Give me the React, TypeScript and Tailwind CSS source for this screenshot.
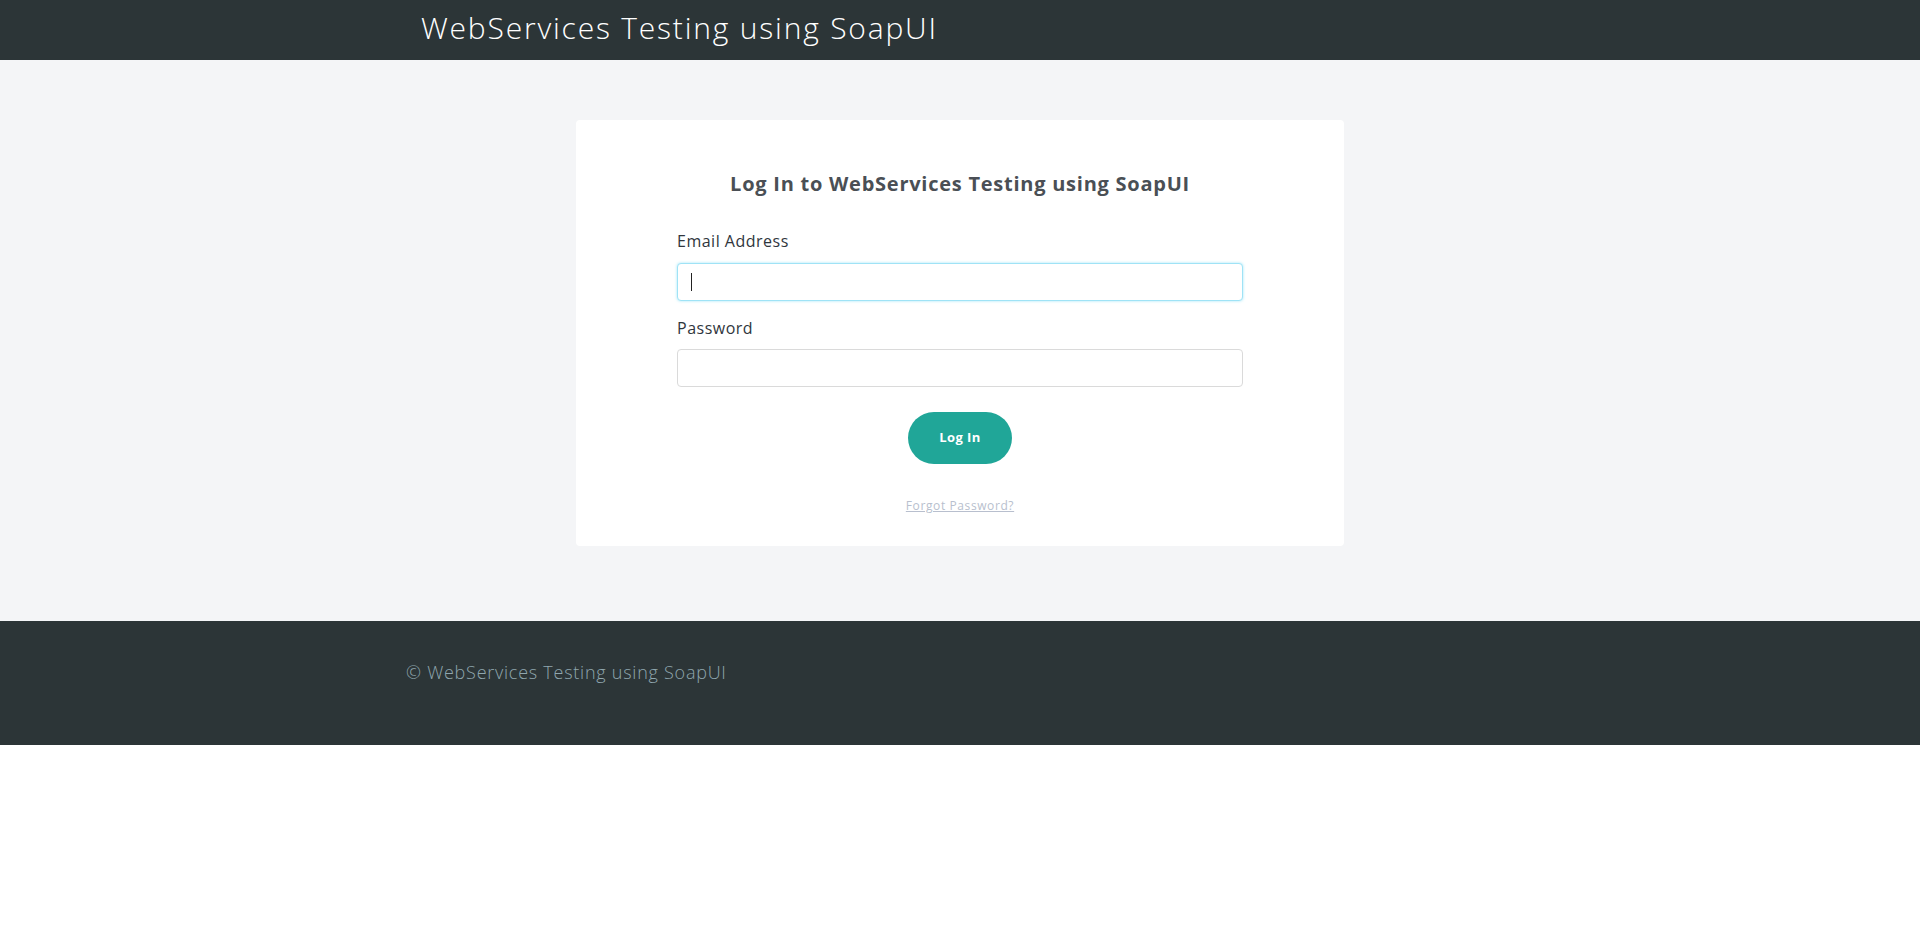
import React from 'react';

const font = { fontFamily: '"Open Sans", "Liberation Sans", sans-serif' };

const App = () => {
  return (
    <div className="min-h-screen bg-white" style={font}>
      {/* Top bar */}
      <header className="h-[60px] bg-[#2c3537]">
        <div className="mx-auto w-[1140px] px-[31px]">
          <h1 className="pt-[6px] text-[30px] font-light leading-[44px] tracking-[1.8px] text-white">
            WebServices Testing using SoapUI
          </h1>
        </div>
      </header>

      {/* Login area */}
      <main className="bg-[#f4f5f7] pt-[60px] pb-[75px]">
        <div className="mx-auto w-[768px] rounded-[4px] bg-white pt-[49px] pb-[30px]">
          <h2 className="text-center text-[20px] font-bold leading-[30px] tracking-[0.75px] text-[#4a4f55]">
            Log In to WebServices Testing using SoapUI
          </h2>

          <form className="mx-auto mt-[30px] w-[566px]" onSubmit={(e) => e.preventDefault()}>
            <label className="block text-[16px] font-normal leading-[24px] tracking-[0.5px] text-[#30363d]">
              Email Address
            </label>
            <div className="mt-[10px] flex h-[38px] items-center rounded-[4px] border border-[#9fe3f6] bg-white px-[13px] shadow-[0_0_3px_rgba(102,214,245,0.6)]">
              <span className="h-[18px] w-px bg-[#222]" />
            </div>

            <label className="mt-[15px] block text-[16px] font-normal leading-[24px] tracking-[0.5px] text-[#30363d]">
              Password
            </label>
            <div className="mt-[9px] h-[38px] rounded-[4px] border border-[#dadada] bg-white" />

            <div className="mt-[25px] flex justify-center">
              <button
                type="submit"
                className="h-[52px] w-[104px] rounded-full bg-[#20a698] text-[13px] font-bold tracking-[0.4px] text-white"
              >
                Log In
              </button>
            </div>

            <div className="mt-[28px] text-center">
              <a href="#" className="text-[12px] leading-[16px] tracking-[0.6px] text-[#b8bfce] underline">
                Forgot Password?
              </a>
            </div>
          </form>
        </div>
      </main>

      {/* Footer */}
      <footer className="h-[124px] bg-[#2c3537]">
        <div className="mx-auto w-[1140px] px-[16px] pt-[37px]">
          <p className="text-[18px] font-light leading-[28px] tracking-[0.75px] text-[#8fa6ae]">
            © WebServices Testing using SoapUI
          </p>
        </div>
      </footer>
    </div>
  );
};

export default App;
